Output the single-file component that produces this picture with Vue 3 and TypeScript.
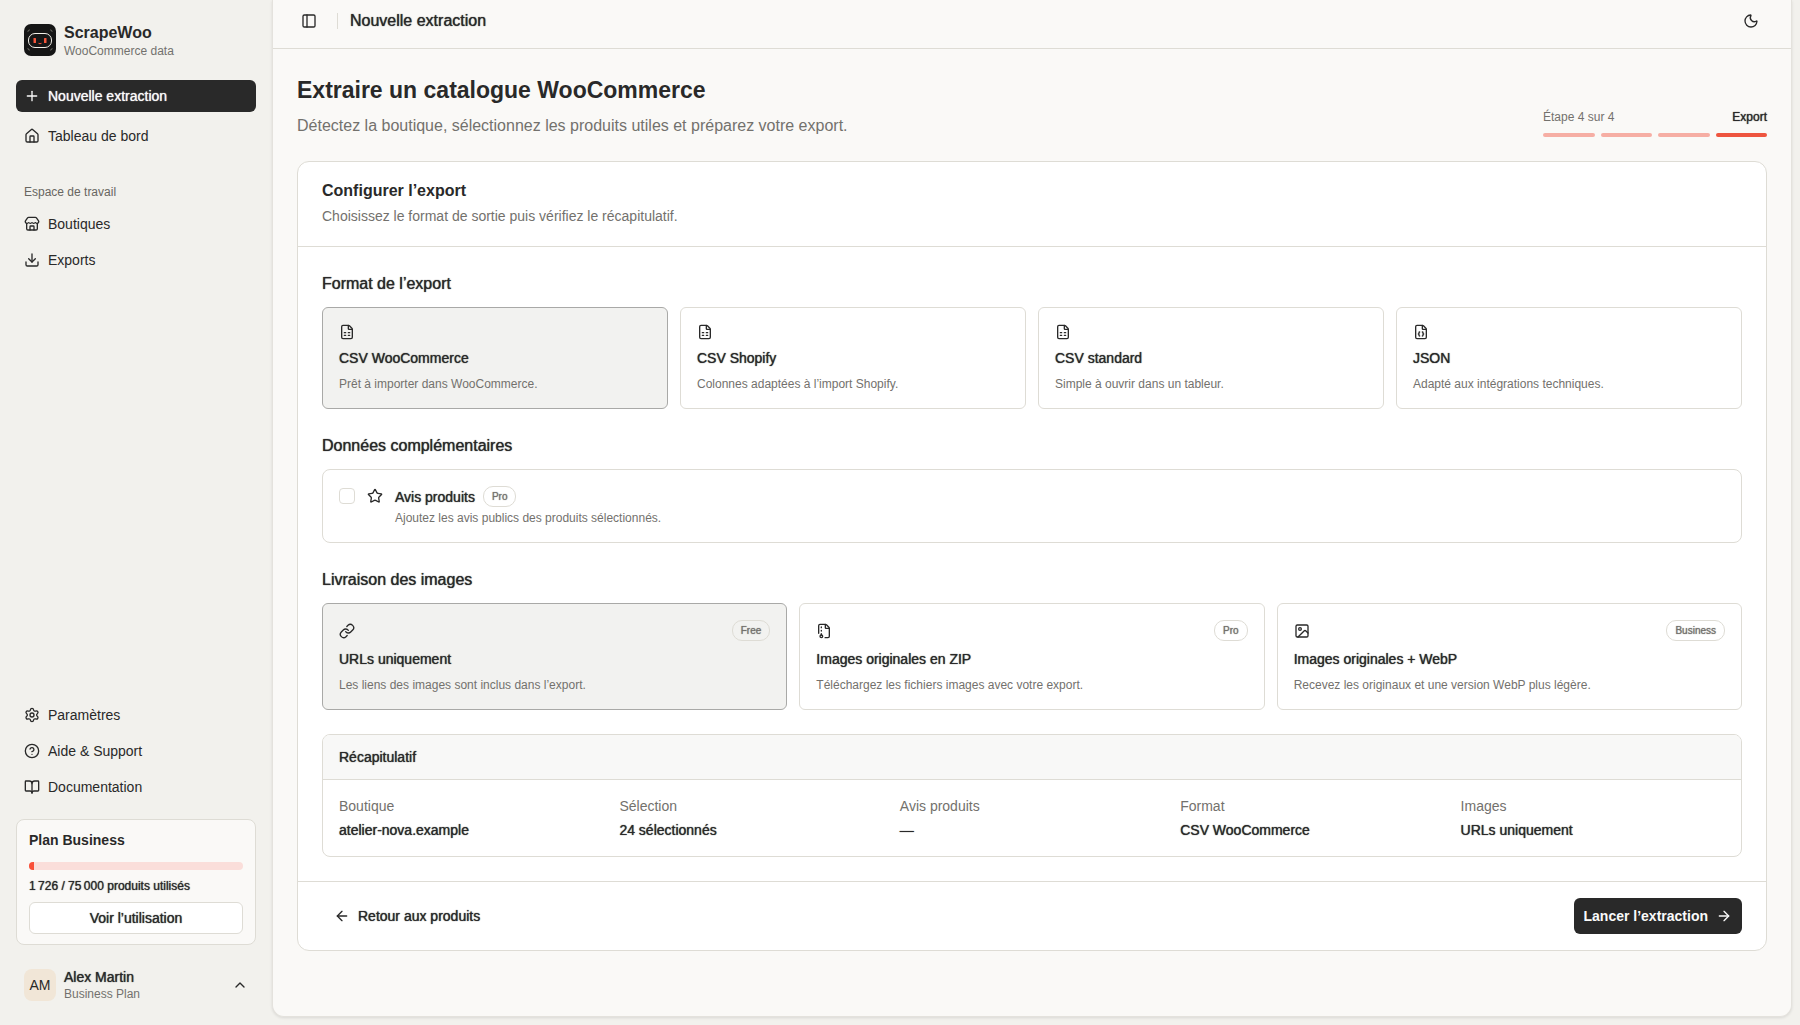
<script setup lang="ts">
import { computed, h, ref, type FunctionalComponent } from 'vue'

type IconName =
  | 'panel' | 'plus' | 'house' | 'store' | 'download' | 'settings' | 'help' | 'book'
  | 'chevronUp' | 'moon' | 'sheet' | 'braces' | 'star' | 'link' | 'archive' | 'image'
  | 'arrowLeft' | 'arrowRight'

const page = 'M6 22a2 2 0 0 1-2-2V4a2 2 0 0 1 2-2h8a2.4 2.4 0 0 1 1.704.706l3.588 3.588A2.4 2.4 0 0 1 20 8v12a2 2 0 0 1-2 2z'
const fold = 'M14 2v5a1 1 0 0 0 1 1h5'
const frame = 'M5 3h14a2 2 0 0 1 2 2v14a2 2 0 0 1-2 2H5a2 2 0 0 1-2-2V5a2 2 0 0 1 2-2z'

const icons: Record<IconName, string[]> = {
  panel: [frame, 'M9 3v18'],
  plus: ['M5 12h14', 'M12 5v14'],
  house: [
    'M15 21v-8a1 1 0 0 0-1-1h-4a1 1 0 0 0-1 1v8',
    'M3 10a2 2 0 0 1 .709-1.528l7-6a2 2 0 0 1 2.582 0l7 6A2 2 0 0 1 21 10v9a2 2 0 0 1-2 2H5a2 2 0 0 1-2-2z',
  ],
  store: [
    'M15 21v-5a1 1 0 0 0-1-1h-4a1 1 0 0 0-1 1v5',
    'M17.774 10.31a1.12 1.12 0 0 0-1.549 0 2.5 2.5 0 0 1-3.451 0 1.12 1.12 0 0 0-1.548 0 2.5 2.5 0 0 1-3.452 0 1.12 1.12 0 0 0-1.549 0 2.5 2.5 0 0 1-3.77-3.248l2.889-4.184A2 2 0 0 1 7 2h10a2 2 0 0 1 1.653.873l2.895 4.192a2.5 2.5 0 0 1-3.774 3.244',
    'M4 10.95V19a2 2 0 0 0 2 2h12a2 2 0 0 0 2-2v-8.05',
  ],
  download: ['M12 15V3', 'M21 15v4a2 2 0 0 1-2 2H5a2 2 0 0 1-2-2v-4', 'm7 10 5 5 5-5'],
  settings: [
    'M9.671 4.136a2.34 2.34 0 0 1 4.659 0 2.34 2.34 0 0 0 3.319 1.915 2.34 2.34 0 0 1 2.33 4.033 2.34 2.34 0 0 0 0 3.831 2.34 2.34 0 0 1-2.33 4.033 2.34 2.34 0 0 0-3.319 1.915 2.34 2.34 0 0 1-4.659 0 2.34 2.34 0 0 0-3.32-1.915 2.34 2.34 0 0 1-2.33-4.033 2.34 2.34 0 0 0 0-3.831A2.34 2.34 0 0 1 6.35 6.051a2.34 2.34 0 0 0 3.319-1.915',
    'M15 12a3 3 0 1 1-6 0 3 3 0 0 1 6 0z',
  ],
  help: ['M22 12a10 10 0 1 1-20 0 10 10 0 0 1 20 0z', 'M9.09 9a3 3 0 0 1 5.83 1c0 2-3 3-3 3', 'M12 17h.01'],
  book: [
    'M12 7v14',
    'M3 18a1 1 0 0 1-1-1V4a1 1 0 0 1 1-1h5a4 4 0 0 1 4 4 4 4 0 0 1 4-4h5a1 1 0 0 1 1 1v13a1 1 0 0 1-1 1h-6a3 3 0 0 0-3 3 3 3 0 0 0-3-3z',
  ],
  chevronUp: ['m18 15-6-6-6 6'],
  moon: ['M20.985 12.486a9 9 0 1 1-9.473-9.472c.405-.022.617.46.402.803a6 6 0 0 0 8.268 8.268c.344-.215.825-.004.803.401'],
  sheet: [page, fold, 'M8 13h2', 'M14 13h2', 'M8 17h2', 'M14 17h2'],
  braces: [
    page, fold,
    'M10 12a1 1 0 0 0-1 1v1a1 1 0 0 1-1 1 1 1 0 0 1 1 1v1a1 1 0 0 0 1 1',
    'M14 18a1 1 0 0 0 1-1v-1a1 1 0 0 1 1-1 1 1 0 0 1-1-1v-1a1 1 0 0 0-1-1',
  ],
  star: [
    'M11.525 2.295a.53.53 0 0 1 .95 0l2.31 4.679a2.123 2.123 0 0 0 1.595 1.16l5.166.756a.53.53 0 0 1 .294.904l-3.736 3.638a2.123 2.123 0 0 0-.611 1.878l.882 5.14a.53.53 0 0 1-.771.56l-4.618-2.428a2.122 2.122 0 0 0-1.973 0L6.396 21.01a.53.53 0 0 1-.77-.56l.881-5.139a2.122 2.122 0 0 0-.611-1.879L2.16 9.795a.53.53 0 0 1 .294-.906l5.165-.755a2.122 2.122 0 0 0 1.597-1.16z',
  ],
  link: [
    'M10 13a5 5 0 0 0 7.54.54l3-3a5 5 0 0 0-7.07-7.07l-1.72 1.71',
    'M14 11a5 5 0 0 0-7.54-.54l-3 3a5 5 0 0 0 7.07 7.07l1.71-1.71',
  ],
  archive: [
    'M13.659 22H18a2 2 0 0 0 2-2V8a2.4 2.4 0 0 0-.706-1.706l-3.588-3.588A2.4 2.4 0 0 0 14 2H6a2 2 0 0 0-2 2v11.5',
    fold, 'M8 12v-1', 'M8 18v-2', 'M8 7V6', 'M10 20a2 2 0 1 1-4 0 2 2 0 0 1 4 0z',
  ],
  image: [frame, 'M11 9a2 2 0 1 1-4 0 2 2 0 0 1 4 0z', 'm21 15-3.086-3.086a2 2 0 0 0-2.828 0L6 21'],
  arrowLeft: ['m12 19-7-7 7-7', 'M19 12H5'],
  arrowRight: ['M5 12h14', 'm12 5 7 7-7 7'],
}

const Icon: FunctionalComponent<{ name: IconName }> = (props) =>
  h(
    'svg',
    {
      width: 16, height: 16, viewBox: '0 0 24 24', fill: 'none', stroke: 'currentColor',
      'stroke-width': 2, 'stroke-linecap': 'round', 'stroke-linejoin': 'round', 'aria-hidden': 'true',
    },
    icons[props.name].map((d) => h('path', { d })),
  )
Icon.props = ['name']

interface NavItem { label: string; icon: IconName }
const workspace: NavItem[] = [
  { label: 'Boutiques', icon: 'store' },
  { label: 'Exports', icon: 'download' },
]
const secondary: NavItem[] = [
  { label: 'Paramètres', icon: 'settings' },
  { label: 'Aide & Support', icon: 'help' },
  { label: 'Documentation', icon: 'book' },
]

interface Choice { id: string; label: string; text: string; icon: IconName; plan?: string }
const formats: Choice[] = [
  { id: 'woo', label: 'CSV WooCommerce', text: 'Prêt à importer dans WooCommerce.', icon: 'sheet' },
  { id: 'shopify', label: 'CSV Shopify', text: 'Colonnes adaptées à l’import Shopify.', icon: 'sheet' },
  { id: 'csv', label: 'CSV standard', text: 'Simple à ouvrir dans un tableur.', icon: 'sheet' },
  { id: 'json', label: 'JSON', text: 'Adapté aux intégrations techniques.', icon: 'braces' },
]
const deliveries: Choice[] = [
  { id: 'urls', label: 'URLs uniquement', text: 'Les liens des images sont inclus dans l’export.', icon: 'link', plan: 'Free' },
  { id: 'zip', label: 'Images originales en ZIP', text: 'Téléchargez les fichiers images avec votre export.', icon: 'archive', plan: 'Pro' },
  { id: 'webp', label: 'Images originales + WebP', text: 'Recevez les originaux et une version WebP plus légère.', icon: 'image', plan: 'Business' },
]

const format = ref('woo')
const delivery = ref('urls')
const reviews = ref(false)

const used = 1726
const quota = 75000
const usage = computed(() => `${(used / quota) * 100}%`)

const summary = computed(() => [
  { term: 'Boutique', value: 'atelier-nova.example' },
  { term: 'Sélection', value: '24 sélectionnés' },
  { term: 'Avis produits', value: reviews.value ? 'Inclus' : '—' },
  { term: 'Format', value: formats.find((f) => f.id === format.value)?.label },
  { term: 'Images', value: deliveries.find((d) => d.id === delivery.value)?.label },
])
</script>

<template>
  <div class="app">
    <aside class="sidebar">
      <a class="brand" href="#">
        <svg class="logo" width="32" height="32" viewBox="0 0 32 32" fill="none" aria-hidden="true">
          <rect width="32" height="32" rx="7" fill="#161616" />
          <path d="M4 8V7.500q0-1.500 1.500-1.500H6M26 6h.500q1.500 0 1.500 1.500V8M4 24v.500q0 1.500 1.500 1.500H6M26 26h.500q1.500 0 1.500-1.500V24" stroke="#8d8981" stroke-width=".7" />
          <rect x="4.500" y="9.500" width="23" height="14" rx="6.500" stroke="#f1efe8" />
          <rect x="9.500" y="14" width="2.500" height="5" rx=".6" fill="#f4553a" />
          <rect x="20" y="14" width="2.500" height="5" rx=".6" fill="#f4553a" />
          <path d="M14.500 19.300q1.500.8 3 0" stroke="#f4553a" />
        </svg>
        <span class="stack">
          <strong class="brand-name">ScrapeWoo</strong>
          <span class="small muted">WooCommerce data</span>
        </span>
      </a>

      <nav class="nav main-nav">
        <a class="nav-item active medium" href="#"><Icon name="plus" />Nouvelle extraction</a>
        <a class="nav-item" href="#"><Icon name="house" />Tableau de bord</a>
      </nav>

      <nav class="nav" aria-labelledby="workspace-label">
        <span id="workspace-label" class="nav-label small">Espace de travail</span>
        <a v-for="item in workspace" :key="item.label" class="nav-item" href="#">
          <Icon :name="item.icon" />{{ item.label }}
        </a>
      </nav>

      <nav class="nav bottom-nav">
        <a v-for="item in secondary" :key="item.label" class="nav-item" href="#">
          <Icon :name="item.icon" />{{ item.label }}
        </a>
      </nav>

      <section class="plan">
        <h2 class="plan-title">Plan Business</h2>
        <div class="meter"><div class="meter-fill" :style="{ width: usage }"></div></div>
        <p class="plan-usage small medium">1&#8239;726 / 75&#8239;000 produits utilisés</p>
        <button class="outline-button medium" type="button">Voir l’utilisation</button>
      </section>

      <button class="account" type="button">
        <span class="avatar">AM</span>
        <span class="stack">
          <span class="medium">Alex Martin</span>
          <span class="small muted">Business Plan</span>
        </span>
        <Icon name="chevronUp" />
      </button>
    </aside>

    <main class="panel">
      <header class="topbar">
        <button class="icon-button" type="button" aria-label="Menu latéral"><Icon name="panel" /></button>
        <span class="divider"></span>
        <span class="topbar-title medium">Nouvelle extraction</span>
        <button class="icon-button theme" type="button" aria-label="Thème sombre"><Icon name="moon" /></button>
      </header>

      <div class="content">
        <div class="intro">
          <div>
            <h1>Extraire un catalogue WooCommerce</h1>
            <p class="lead muted">Détectez la boutique, sélectionnez les produits utiles et préparez votre export.</p>
          </div>
          <div class="progress">
            <div class="progress-labels small">
              <span class="muted">Étape 4 sur 4</span>
              <span class="medium">Export</span>
            </div>
            <div class="steps">
              <span v-for="n in 4" :key="n" class="step" :class="{ current: n === 4 }"></span>
            </div>
          </div>
        </div>

        <form class="card" @submit.prevent>
          <header class="card-head">
            <h2>Configurer l’export</h2>
            <p class="muted">Choisissez le format de sortie puis vérifiez le récapitulatif.</p>
          </header>

          <div class="card-body">
            <section class="group">
              <h3 class="medium">Format de l’export</h3>
              <div class="choices four">
                <label v-for="f in formats" :key="f.id" class="choice" :class="{ selected: format === f.id }">
                  <input v-model="format" type="radio" name="format" :value="f.id" />
                  <Icon :name="f.icon" />
                  <span class="choice-title medium">{{ f.label }}</span>
                  <span class="small muted">{{ f.text }}</span>
                </label>
              </div>
            </section>

            <section class="group">
              <h3 class="medium">Données complémentaires</h3>
              <label class="addon">
                <input v-model="reviews" type="checkbox" />
                <Icon name="star" />
                <span class="stack">
                  <span class="addon-title"><span class="medium">Avis produits</span><span class="badge medium">Pro</span></span>
                  <span class="small muted">Ajoutez les avis publics des produits sélectionnés.</span>
                </span>
              </label>
            </section>

            <section class="group">
              <h3 class="medium">Livraison des images</h3>
              <div class="choices three">
                <label v-for="d in deliveries" :key="d.id" class="choice" :class="{ selected: delivery === d.id }">
                  <input v-model="delivery" type="radio" name="delivery" :value="d.id" />
                  <span class="choice-top"><Icon :name="d.icon" /><span class="badge medium">{{ d.plan }}</span></span>
                  <span class="choice-title medium">{{ d.label }}</span>
                  <span class="small muted">{{ d.text }}</span>
                </label>
              </div>
            </section>

            <section class="recap">
              <h3 class="recap-title medium">Récapitulatif</h3>
              <dl class="recap-list">
                <div v-for="row in summary" :key="row.term">
                  <dt class="muted">{{ row.term }}</dt>
                  <dd class="medium">{{ row.value }}</dd>
                </div>
              </dl>
            </section>
          </div>

          <footer class="card-foot">
            <button class="ghost-button medium" type="button"><Icon name="arrowLeft" />Retour aux produits</button>
            <button class="primary-button" type="submit">Lancer l’extraction<Icon name="arrowRight" /></button>
          </footer>
        </form>
      </div>
    </main>
  </div>
</template>

<style>
body {
  margin: 0;
  background: #f2f1ed;
}
</style>

<style scoped>
.app {
  display: flex;
  min-height: 100vh;
  background: #f2f1ed;
  color: #292929;
  font-family: "Liberation Sans", Arial, sans-serif;
  font-size: 14px;
  line-height: 20px;
}
.app *,
.app {
  box-sizing: border-box;
}
svg {
  display: block;
  flex: none;
}
h1, h2, h3, p, dl, dd {
  margin: 0;
}
a {
  color: inherit;
  text-decoration: none;
}
button {
  font: inherit;
  color: inherit;
  border: 0;
  background: none;
  padding: 0;
}
.small {
  font-size: 12px;
  line-height: 16px;
}
.muted {
  color: #73716d;
}
.medium {
  font-weight: 400;
  text-shadow: 0 0 1px currentColor;
}
.stack {
  display: flex;
  flex-direction: column;
  align-items: flex-start;
}

/* Sidebar */
.sidebar {
  display: flex;
  flex-direction: column;
  flex: none;
  width: 272px;
  padding: 24px 16px 16px;
}
.brand {
  display: flex;
  gap: 8px;
  padding: 0 8px;
  height: 40px;
}
.brand-name {
  font-size: 16px;
  line-height: 18px;
}
.brand .small {
  margin-top: 1px;
}
.nav {
  display: flex;
  flex-direction: column;
  gap: 4px;
}
.main-nav {
  gap: 8px;
  margin: 16px 0 24px;
}
.nav-item {
  display: flex;
  align-items: center;
  gap: 8px;
  height: 32px;
  padding: 0 8px;
  border-radius: 6px;
}
.nav-item.active {
  background: #292929;
  color: #fafafa;
}
.nav-label {
  padding: 8px 8px 4px;
  color: #686661;
}
.bottom-nav {
  margin-top: auto;
  margin-bottom: 16px;
}
.plan {
  padding: 10px 12px;
  border: 1px solid #dedcd5;
  border-radius: 8px;
  background: #faf9f7;
}
.plan-title {
  font-size: 14px;
  line-height: 20px;
}
.meter {
  height: 8px;
  margin: 12px 0 8px;
  border-radius: 4px;
  overflow: hidden;
  background: #fadeda;
}
.meter-fill {
  height: 8px;
  background: #f94f38;
}
.outline-button {
  width: 100%;
  height: 32px;
  margin-top: 8px;
  border: 1px solid #dedcd5;
  border-radius: 6px;
  background: #fff;
}
.account {
  display: flex;
  align-items: center;
  gap: 8px;
  height: 48px;
  margin-top: 16px;
  padding: 0 8px;
  text-align: left;
}
.account > svg {
  margin-left: auto;
}
.account .medium {
  line-height: 18px;
}
.avatar {
  display: grid;
  place-items: center;
  width: 32px;
  height: 32px;
  border-radius: 8px;
  background: #f1e6d7;
}

/* Main panel */
.panel {
  flex: 1;
  min-width: 0;
  margin: 0 8px 8px 0;
  border: 1px solid #e4e2dd;
  border-top: 0;
  border-radius: 0 0 12px 12px;
  background: #faf9f7;
  box-shadow: 0 1px 3px #0000001a;
}
.topbar {
  display: flex;
  align-items: center;
  height: 49px;
  padding: 0 24px 6px 20px;
  border-bottom: 1px solid #dedcd5;
}
.icon-button {
  display: grid;
  place-items: center;
  width: 32px;
  height: 32px;
}
.divider {
  width: 1px;
  height: 16px;
  margin: 0 12px;
  background: #dedcd5;
}
.topbar-title {
  font-size: 16px;
}
.theme {
  margin-left: auto;
}
.content {
  padding: 24px;
}
.intro {
  display: flex;
  align-items: flex-end;
  justify-content: space-between;
  margin-bottom: 24px;
}
h1 {
  font-size: 23px;
  line-height: 34px;
}
.lead {
  margin-top: 8px;
  font-size: 16px;
  line-height: 22px;
}
.progress {
  width: 224px;
}
.progress-labels {
  display: flex;
  justify-content: space-between;
  margin-bottom: 8px;
}
.steps {
  display: flex;
  gap: 6px;
}
.step {
  flex: 1;
  height: 4px;
  border-radius: 2px;
  background: #f6aea4;
}
.step.current {
  background: #ee553f;
}

/* Card */
.card {
  border: 1px solid #dedcd5;
  border-radius: 12px;
  background: #fff;
}
.card-head {
  padding: 16px 24px 20px;
  border-bottom: 1px solid #dedcd5;
}
.card-head h2 {
  font-size: 16px;
  line-height: 26px;
}
.card-head p {
  margin-top: 2px;
}
.card-body {
  display: flex;
  flex-direction: column;
  gap: 24px;
  padding: 24px;
}
.group h3 {
  margin-bottom: 10px;
  font-size: 16px;
  line-height: 26px;
}
.choices {
  display: grid;
  gap: 12px;
}
.four {
  grid-template-columns: repeat(4, 1fr);
}
.three {
  grid-template-columns: repeat(3, 1fr);
}
.choice {
  position: relative;
  display: flex;
  flex-direction: column;
  padding: 16px;
  border: 1px solid #dedcd5;
  border-radius: 6px;
}
.choice.selected {
  border-color: #a9a9a7;
  background: #f2f2f0;
}
.choice input {
  appearance: none;
  position: absolute;
  inset: 0;
  margin: 0;
}
.choice-title {
  margin: 8px 0;
}
.choice-top {
  display: flex;
  align-items: center;
  justify-content: space-between;
}
.badge {
  padding: 2px 8px;
  border: 1px solid #dedcd5;
  border-radius: 10px;
  color: #73716d;
  font-size: 10px;
  line-height: 15px;
}
.addon {
  display: flex;
  align-items: flex-start;
  gap: 12px;
  padding: 16px;
  border: 1px solid #dedcd5;
  border-radius: 8px;
}
.addon input {
  appearance: none;
  width: 16px;
  height: 16px;
  margin: 2px 0 0;
  border: 1px solid #dedcd5;
  border-radius: 4px;
}
.addon input:checked {
  background: #292929;
}
.addon > svg {
  margin-top: 2px;
}
.addon-title {
  display: flex;
  align-items: center;
  gap: 8px;
  margin-bottom: 3px;
}
.recap {
  border: 1px solid #dedcd5;
  border-radius: 8px;
  overflow: hidden;
}
.recap-title {
  padding: 12px 16px;
  border-bottom: 1px solid #dedcd5;
  background: #f8f8f7;
  font-size: 14px;
  line-height: 20px;
}
.recap-list {
  display: grid;
  grid-template-columns: repeat(5, 1fr);
  gap: 16px;
  padding: 16px;
}
.recap-list dd {
  margin-top: 4px;
}
.card-foot {
  display: flex;
  align-items: center;
  justify-content: space-between;
  padding: 16px 24px;
  border-top: 1px solid #dedcd5;
}
.ghost-button,
.primary-button {
  display: flex;
  align-items: center;
  gap: 8px;
  height: 36px;
  padding: 0 12px;
  border-radius: 6px;
}
.primary-button {
  padding: 0 10px;
  background: #292929;
  color: #fafafa;
  font-weight: 700;
}
</style>
